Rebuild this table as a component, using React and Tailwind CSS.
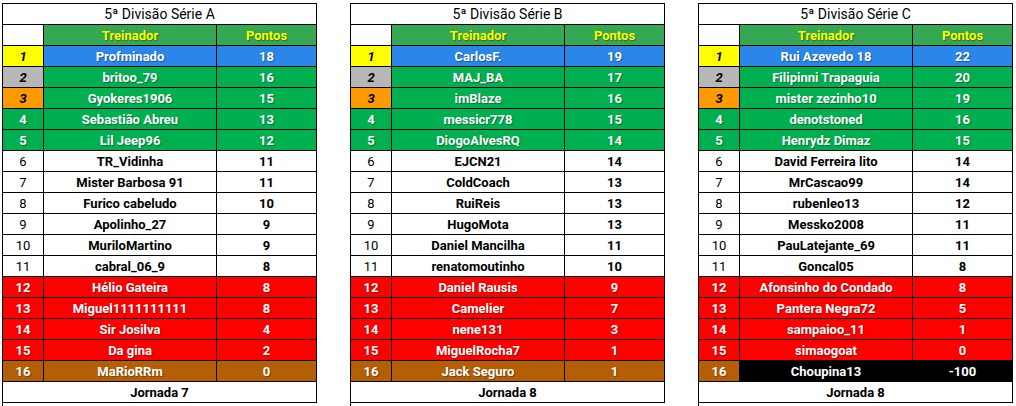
import React from 'react';

const FONT = { fontFamily: 'Roboto, "Liberation Sans", sans-serif' };

const tables = [
    {
        title: '5ª Divisão Série A',
        footer: 'Jornada 7',
        rows: [
            ['Profminado', 18], ['britoo_79', 16], ['Gyokeres1906', 15], ['Sebastião Abreu', 13],
            ['Lil Jeep96', 12], ['TR_Vidinha', 11], ['Mister Barbosa 91', 11], ['Furico cabeludo', 10],
            ['Apolinho_27', 9], ['MuriloMartino', 9], ['cabral_06_9', 8], ['Hélio Gateira', 8],
            ['Miguel1111111111', 8], ['Sir Josilva', 4], ['Da gina', 2], ['MaRioRRm', 0],
        ],
    },
    {
        title: '5ª Divisão Série B',
        footer: 'Jornada 8',
        rows: [
            ['CarlosF.', 19], ['MAJ_BA', 17], ['imBlaze', 16], ['messicr778', 15],
            ['DiogoAlvesRQ', 14], ['EJCN21', 14], ['ColdCoach', 13], ['RuiReis', 13],
            ['HugoMota', 13], ['Daniel Mancilha', 11], ['renatomoutinho', 10], ['Daniel Rausis', 9],
            ['Camelier', 7], ['nene131', 3], ['MiguelRocha7', 1], ['Jack Seguro', 1],
        ],
    },
    {
        title: '5ª Divisão Série C',
        footer: 'Jornada 8',
        blackLast: true,
        rows: [
            ['Rui Azevedo 18', 22], ['Filipinni Trapaguia', 20], ['mister zezinho10', 19], ['denotstoned', 16],
            ['Henrydz Dimaz', 15], ['David Ferreira lito', 14], ['MrCascao99', 14], ['rubenleo13', 12],
            ['Messko2008', 11], ['PauLatejante_69', 11], ['Goncal05', 8], ['Afonsinho do Condado', 8],
            ['Pantera Negra72', 5], ['sampaioo_11', 1], ['simaogoat', 0], ['Choupina13', -100],
        ],
    },
];

const shadow = '[text-shadow:1px_1px_1px_rgba(0,0,0,0.35)]';

// position cell colour + text style per place
const posClass = (pos) => {
    if (pos === 1) return 'bg-[#ffff00] text-black italic font-bold';
    if (pos === 2) return 'bg-[#b7b7b7] text-black italic font-bold';
    if (pos === 3) return 'bg-[#ff9900] text-black italic font-bold';
    if (pos <= 5) return `bg-[#00b050] text-white font-bold ${shadow}`;
    if (pos <= 11) return 'bg-white text-black';
    if (pos <= 15) return `bg-[#ff0000] text-white font-bold ${shadow}`;
    return `bg-[#b45f06] text-white font-bold ${shadow}`;
};

const rowClass = (pos, blackLast) => {
    if (pos === 1) return `bg-[#2a86e8] text-white ${shadow}`;
    if (pos <= 5) return `bg-[#00b050] text-white ${shadow}`;
    if (pos <= 11) return 'bg-white text-black';
    if (pos <= 15) return `bg-[#ff0000] text-white ${shadow}`;
    if (blackLast) return `bg-black text-white ${shadow}`;
    return `bg-[#b45f06] text-white ${shadow}`;
};

const cell = 'h-[21px] border-r border-b border-black flex items-center justify-center text-[13px] leading-none';

const Standings = ({ table }) => (
    <div className="w-[315px] border-l border-t border-black flex flex-col" style={FONT}>
        <div className={`${cell} w-[314px] bg-white text-black text-[14px]`}>{table.title}</div>
        <div className="flex">
            <div className={`${cell} w-[41px] bg-white`}></div>
            <div className={`${cell} w-[173px] bg-[#34a853] text-[#ffff00] font-bold ${shadow}`}>Treinador</div>
            <div className={`${cell} w-[100px] bg-[#34a853] text-[#ffff00] font-bold ${shadow}`}>Pontos</div>
        </div>
        {table.rows.map(([name, pts], i) => {
            const pos = i + 1;
            return (
                <div key={pos} className="flex">
                    <div className={`${cell} w-[41px] ${posClass(pos)}`}>{pos}</div>
                    <div className={`${cell} w-[173px] font-bold ${rowClass(pos, table.blackLast)}`}>{name}</div>
                    <div className={`${cell} w-[100px] font-bold ${rowClass(pos, table.blackLast)}`}>{pts}</div>
                </div>
            );
        })}
        <div className={`${cell} w-[314px] bg-white text-black font-bold`}>{table.footer}</div>
    </div>
);

export default function App() {
    return (
        <div className="w-[1016px] h-[406px] bg-white pl-[2px] pt-[3px] flex gap-[33px]">
            {tables.map((t) => (
                <Standings key={t.title} table={t} />
            ))}
        </div>
    );
}
